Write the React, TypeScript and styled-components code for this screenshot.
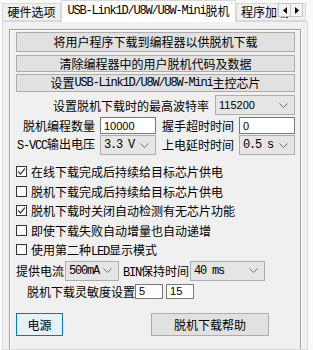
import React from 'react';
import styled, { createGlobalStyle } from 'styled-components';

const Global = createGlobalStyle`
  html, body { margin: 0; padding: 0; }
  body {
    background: #fafafa;
    font-family: "Noto Sans CJK SC", "Noto Sans", sans-serif;
    font-size: 12px;
    color: #000;
  }
`;

const Window = styled.div`
  width: 313px;
  height: 350px;
  overflow: hidden;
  background: #fafafa;
  display: flex;
  flex-direction: column;
`;

const TabStrip = styled.div`
  position: relative;
  height: 21px;
  flex: none;
  display: flex;
  align-items: flex-end;
  padding-left: 2px;
  z-index: 1;
`;

const Tab = styled.div<{ $active?: boolean; $w: number }>`
  box-sizing: border-box;
  flex: none;
  width: ${(p) => p.$w}px;
  height: ${(p) => (p.$active ? 22 : 18)}px;
  margin-bottom: ${(p) => (p.$active ? -1 : 0)}px;
  border: 1px solid #d9d9d9;
  border-bottom: ${(p) => (p.$active ? 'none' : '1px solid #d9d9d9')};
  background: ${(p) => (p.$active ? '#ffffff' : '#f0f0f0')};
  display: flex;
  align-items: center;
  justify-content: center;
  white-space: nowrap;
  overflow: hidden;
  line-height: 16px;
  padding-bottom: ${(p) => (p.$active ? 2 : 0)}px;
`;

const Scroller = styled.div`
  position: absolute;
  left: 278px;
  top: 3px;
  display: flex;
  background: #fafafa;
`;

const ScrollBtn = styled.div`
  box-sizing: border-box;
  width: 13px;
  height: 14px;
  border: 1px solid #c4c4c4;
  background: #f4f4f4;
  display: flex;
  align-items: center;
  justify-content: center;
  & + & { margin-left: -1px; }
`;

const TabPage = styled.div`
  box-sizing: border-box;
  flex: 1;
  margin: 0 5px 0 2px;
  border: 1px solid #d9d9d9;
  background: #f0f0f0;
  padding: 7px 6px 0 6px;
  overflow: hidden;
`;

const Frame = styled.div`
  box-sizing: border-box;
  height: 360px;
  border: 1px solid #a0a0a0;
  box-shadow: 1px 1px 0 #fff, inset 1px 1px 0 #fff;
  padding: 2px 5px 0 6px;
  display: flex;
  flex-direction: column;
`;

const Lat = styled.span`
  font-family: "Liberation Mono", "DejaVu Sans Mono", monospace;
  font-size: 12px;
  letter-spacing: -1.2px;
`;

const WideButton = styled.div<{ $h: number; $mt: number }>`
  box-sizing: border-box;
  height: ${(p) => p.$h}px;
  margin-top: ${(p) => p.$mt}px;
  background: #e1e1e1;
  border: 1px solid #adadad;
  display: flex;
  align-items: center;
  justify-content: center;
  white-space: nowrap;
  line-height: 14px;
`;

const BaudRow = styled.div`
  display: flex;
  justify-content: flex-end;
  align-items: center;
  height: 20px;
  margin-top: 3px;
`;

const Label = styled.span<{ $mr?: number; $ml?: number }>`
  white-space: nowrap;
  margin-right: ${(p) => p.$mr ?? 0}px;
  margin-left: ${(p) => p.$ml ?? 0}px;
`;

const FieldGrid = styled.div<{ $h: number; $mt: number }>`
  display: grid;
  grid-template-columns: 84px 56px 83px 56px;
  height: ${(p) => p.$h}px;
  margin-top: ${(p) => p.$mt}px;
  align-items: center;
`;

const GridLabel = styled.span`
  text-align: right;
  padding-right: 5px;
  white-space: nowrap;
  line-height: 14px;
`;

const SelectBox = styled.div<{ $w?: number }>`
  box-sizing: border-box;
  width: ${(p) => (p.$w ? `${p.$w}px` : '100%')};
  height: 20px;
  background: #e5e5e5;
  border: 1px solid #adadad;
  display: flex;
  align-items: center;
  justify-content: space-between;
  padding: 0 6px 0 3px;
  flex: none;
`;

const SansVal = styled.span`
  font-family: "Liberation Sans", Arial, sans-serif;
  font-size: 11px;
`;

const MonoVal = styled.span`
  font-family: "Liberation Mono", "DejaVu Sans Mono", monospace;
  font-size: 12px;
  letter-spacing: -1.2px;
  white-space: pre;
`;

const TextInput = styled.div<{ $w?: number; $h: number; $ml?: number }>`
  box-sizing: border-box;
  width: ${(p) => (p.$w ? `${p.$w}px` : '100%')};
  height: ${(p) => p.$h}px;
  margin-left: ${(p) => p.$ml ?? 0}px;
  background: #fff;
  border: 1px solid #7a7a7a;
  display: flex;
  align-items: center;
  padding-left: 3px;
  flex: none;
`;

const CheckList = styled.div`
  margin-top: 7px;
  display: flex;
  flex-direction: column;
`;

const CheckRow = styled.div`
  height: 19.5px;
  display: flex;
  align-items: center;
  white-space: nowrap;
`;

const Box = styled.div`
  box-sizing: border-box;
  width: 11px;
  height: 11px;
  border: 1px solid #333;
  background: #fff;
  margin-right: 4px;
  display: flex;
  align-items: center;
  justify-content: center;
  flex: none;
`;

const FlexRow = styled.div<{ $h: number; $mt: number; $pl?: number }>`
  display: flex;
  align-items: center;
  height: ${(p) => p.$h}px;
  margin-top: ${(p) => p.$mt}px;
  padding-left: ${(p) => p.$pl ?? 0}px;
  white-space: nowrap;
`;

const Btn = styled.div<{ $w: number; $ml?: number; $primary?: boolean }>`
  box-sizing: border-box;
  width: ${(p) => p.$w}px;
  height: 23px;
  margin-left: ${(p) => p.$ml ?? 0}px;
  background: ${(p) => (p.$primary ? '#e5f1fb' : '#e1e1e1')};
  border: 1px solid ${(p) => (p.$primary ? '#0078d7' : '#adadad')};
  display: flex;
  align-items: center;
  justify-content: center;
  flex: none;
`;

const Chevron = () => (
  <svg width="9" height="5" viewBox="0 0 9 5">
    <polyline points="0.5,0.5 4.5,4.5 8.5,0.5" fill="none" stroke="#707070" strokeWidth="1" />
  </svg>
);

const Check = () => (
  <svg width="9" height="9" viewBox="0 0 9 9">
    <polyline points="1,4.5 3.5,7 8,1.5" fill="none" stroke="#444" strokeWidth="1.2" />
  </svg>
);

const Select = ({ w, children }: { w?: number; children: React.ReactNode }) => (
  <SelectBox $w={w}>
    {children}
    <Chevron />
  </SelectBox>
);

const CheckItem = ({ checked, children }: { checked?: boolean; children: React.ReactNode }) => (
  <CheckRow>
    <Box>{checked ? <Check /> : null}</Box>
    <span>{children}</span>
  </CheckRow>
);

export default function App() {
  return (
    <>
      <Global />
      <Window>
        <TabStrip>
          <Tab $w={59}>硬件选项</Tab>
          <Tab $w={175} $active>
            <Lat>USB-Link1D/U8W/U8W-Mini</Lat>脱机
          </Tab>
          <Tab $w={70} style={{ justifyContent: 'flex-start', paddingLeft: 4 }}>程序加载</Tab>
          <Scroller>
            <ScrollBtn>
              <svg width="4" height="7" viewBox="0 0 4 7"><polygon points="4,0 0,3.5 4,7" fill="#000" /></svg>
            </ScrollBtn>
            <ScrollBtn>
              <svg width="4" height="7" viewBox="0 0 4 7"><polygon points="0,0 4,3.5 0,7" fill="#000" /></svg>
            </ScrollBtn>
          </Scroller>
        </TabStrip>
        <TabPage>
          <Frame>
            <WideButton $h={20} $mt={0}>将用户程序下载到编程器以供脱机下载</WideButton>
            <WideButton $h={17} $mt={3}>清除编程器中的用户脱机代码及数据</WideButton>
            <WideButton $h={18} $mt={2}>
              设置<Lat>USB-Link1D/U8W/U8W-Mini</Lat>主控芯片
            </WideButton>
            <BaudRow>
              <Label $mr={6}>设置脱机下载时的最高波特率</Label>
              <Select w={80}><SansVal>115200</SansVal></Select>
            </BaudRow>
            <FieldGrid $h={17} $mt={2}>
              <GridLabel>脱机编程数量</GridLabel>
              <TextInput $h={17}><SansVal>10000</SansVal></TextInput>
              <GridLabel>握手超时时间</GridLabel>
              <TextInput $h={17}><SansVal>0</SansVal></TextInput>
            </FieldGrid>
            <FieldGrid $h={20} $mt={1}>
              <GridLabel><Lat>S-VCC</Lat>输出电压</GridLabel>
              <Select><MonoVal>3.3 V</MonoVal></Select>
              <GridLabel>上电延时时间</GridLabel>
              <Select><MonoVal>0.5 s</MonoVal></Select>
            </FieldGrid>
            <CheckList>
              <CheckItem checked>在线下载完成后持续给目标芯片供电</CheckItem>
              <CheckItem>脱机下载完成后持续给目标芯片供电</CheckItem>
              <CheckItem checked>脱机下载时关闭自动检测有无芯片功能</CheckItem>
              <CheckItem>即使下载失败自动增量也自动递增</CheckItem>
              <CheckItem>使用第二种<Lat>LED</Lat>显示模式</CheckItem>
            </CheckList>
            <FlexRow $h={20} $mt={1}>
              <Label $mr={1}>提供电流</Label>
              <Select w={54}><MonoVal>500mA</MonoVal></Select>
              <Label $mr={1} $ml={4}><Lat>BIN</Lat>保持时间</Label>
              <Select w={75}><MonoVal>40 ms</MonoVal></Select>
            </FlexRow>
            <FlexRow $h={15} $mt={3} $pl={11}>
              <Label>脱机下载灵敏度设置</Label>
              <TextInput $w={28} $h={15}><SansVal>5</SansVal></TextInput>
              <TextInput $w={28} $h={15} $ml={3}><SansVal>15</SansVal></TextInput>
            </FlexRow>
            <FlexRow $h={23} $mt={14}>
              <Btn $w={47} $primary>电源</Btn>
              <Btn $w={118} $ml={88}>脱机下载帮助</Btn>
            </FlexRow>
          </Frame>
        </TabPage>
      </Window>
    </>
  );
}
